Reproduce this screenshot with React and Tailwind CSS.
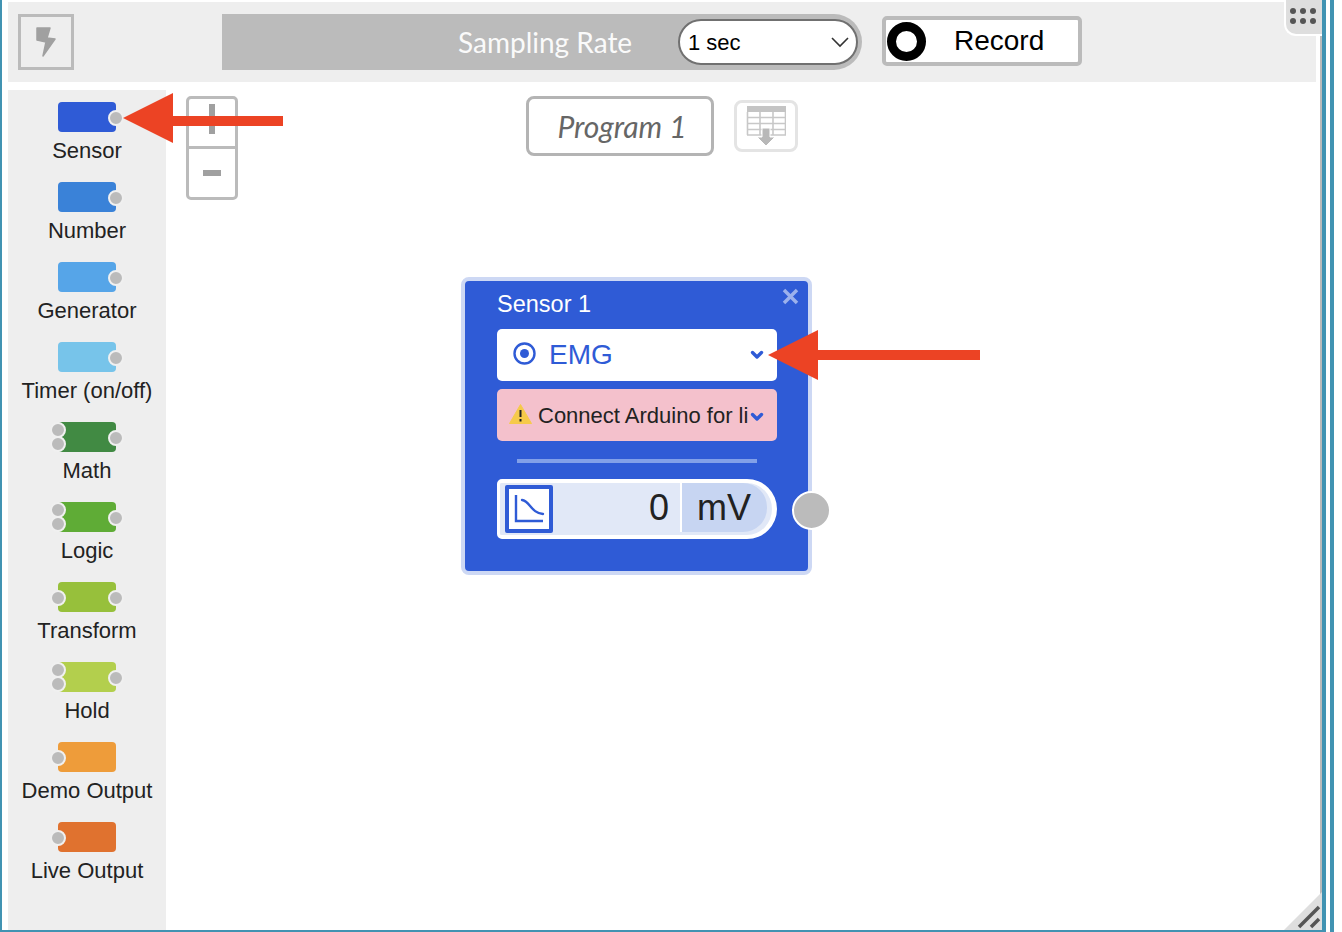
const blocks = [
  { label: "Sensor", color: "bg-[#2f5bd6]", inputs: 0, output: true },
  { label: "Number", color: "bg-[#3a82d8]", inputs: 0, output: true },
  { label: "Generator", color: "bg-[#56a5e8]", inputs: 0, output: true },
  { label: "Timer (on/off)", color: "bg-[#77c4ea]", inputs: 0, output: true },
  { label: "Math", color: "bg-[#418a43]", inputs: 2, output: true },
  { label: "Logic", color: "bg-[#5fac36]", inputs: 2, output: true },
  { label: "Transform", color: "bg-[#97c03b]", inputs: 1, output: true },
  { label: "Hold", color: "bg-[#b3cf4d]", inputs: 2, output: true },
  { label: "Demo Output", color: "bg-[#ee9c3a]", inputs: 1, output: false },
  { label: "Live Output", color: "bg-[#e0722f]", inputs: 1, output: false },
];

function Port({ className }) {
  return <span className={"absolute w-[16px] h-[16px] rounded-full bg-[#bbbbbb] border-2 border-[#f0f0f0] " + className} />;
}

function Block({ block }) {
  return (
    <div className="h-[80px] flex flex-col items-center">
      <div className={"relative w-[58px] h-[30px] rounded-[4px] " + block.color}>
        {block.inputs === 1 && <Port className="left-[-8px] top-[8px]" />}
        {block.inputs === 2 && <Port className="left-[-8px] top-[0px]" />}
        {block.inputs === 2 && <Port className="left-[-8px] top-[14px]" />}
        {block.output && <Port className="right-[-8px] top-[8px]" />}
      </div>
      <div className="mt-[6px] text-[22px] leading-[26px] text-[#222222] whitespace-nowrap">{block.label}</div>
    </div>
  );
}

function Arrow({ className, width, shaft }) {
  return (
    <svg className={"absolute " + className} width={width} height="52" viewBox={`0 0 ${width} 52`} fill="#ec4324">
      <path d={`M0 26 L50 1 L50 ${shaft} L${width} ${shaft} L${width} ${shaft + 10} L50 ${shaft + 10} L50 51 Z`} />
    </svg>
  );
}

function Chevron() {
  return (
    <svg width="14" height="10" viewBox="0 0 14 10" fill="none" stroke="#2f5bd6" strokeWidth="3.4" strokeLinecap="round" strokeLinejoin="round">
      <path d="M2.5 2.5 L7 7 L11.5 2.5" />
    </svg>
  );
}

export default function App() {
  return (
    <div className="relative w-[1342px] h-[932px] overflow-hidden bg-white font-['Liberation_Sans',Arial,sans-serif]">
      <div className="absolute left-0 top-0 w-[2px] h-full bg-[#4193b2]" />
      <div className="absolute left-[1322px] top-0 w-[4px] h-full bg-[#4193b2]" />
      <div className="absolute left-[1330px] top-0 w-[4px] h-full bg-[#4193b2]" />
      <div className="absolute left-0 top-[930px] w-[1326px] h-[2px] bg-[#4193b2]" />
      <div className="absolute left-[1320px] top-[36px] w-[2px] h-[860px] bg-[#bbbbbb]" />

      <div className="w-[1308px] ml-[8px] pt-[2px]">
        <header className="relative h-[80px] bg-[#eeeeee] flex items-center">
          <div className="ml-[10px] w-[56px] h-[56px] border-[3px] border-[#bbbbbb] flex items-center justify-center">
            <svg width="22" height="32" viewBox="0 0 22 32" fill="#a0a0a0" stroke="#a0a0a0" strokeWidth="1.5" strokeLinejoin="round">
              <path d="M2 2 L15 2 L12 12 L20 13 L8 30 L11 16 L2 14 Z" />
            </svg>
          </div>
          <div className="ml-[148px] w-[640px] h-[56px] bg-[#bbbbbb] rounded-r-[28px] flex items-center">
            <div className="ml-[236px] w-[175px] text-[28px] leading-none text-[#fafafa] font-['Lato',sans-serif] whitespace-nowrap">Sampling Rate</div>
            <div className="ml-[45px] w-[180px] h-[46px] rounded-[23px] bg-white border-2 border-[#707070] flex items-center justify-between pl-[8px] pr-[6px] text-[22px] text-black">
              <span>1 sec</span>
              <svg width="20" height="12" viewBox="0 0 20 12" fill="none" stroke="#333333" strokeWidth="1.6">
                <path d="M2 2 L10 10 L18 2" />
              </svg>
            </div>
          </div>
          <div className="ml-[20px] mb-[2px] w-[200px] h-[50px] bg-white border-[4px] border-[#bbbbbb] rounded-[5px] flex items-center">
            <span className="ml-[1px] w-[39px] h-[39px] rounded-full border-[9px] border-black bg-white" />
            <span className="ml-[28px] text-[28px] text-black">Record</span>
          </div>
          <div className="absolute right-[-6px] top-[-2px] w-[38px] h-[36px] bg-[#dedede] border-l-2 border-b-2 border-white rounded-bl-[12px] pr-[2px] pb-[2px] grid grid-cols-[6px_6px_6px] gap-x-[4px] gap-y-[4px] content-center justify-center">
            {[0, 1, 2, 3, 4, 5].map((i) => (
              <span key={i} className="w-[6px] h-[6px] rounded-full bg-[#555555]" />
            ))}
          </div>
        </header>

        <div className="flex mt-[8px]">
          <aside className="w-[158px] h-[842px] bg-[#eeeeee] pt-[12px]">
            {blocks.map((b) => (
              <Block key={b.label} block={b} />
            ))}
          </aside>

          <main className="relative flex-1">
            <div className="absolute left-[20px] top-[6px] w-[52px] h-[104px] border-[3px] border-[#bbbbbb] rounded-[5px] flex flex-col">
              <div className="h-[50px] border-b-[3px] border-[#bbbbbb] flex items-center justify-center">
                <div className="relative w-[18px] h-[30px] mb-[8px]">
                  <span className="absolute left-[6px] top-0 w-[6px] h-[30px] bg-[#a0a0a0]" />
                  <span className="absolute left-0 top-[12px] w-[18px] h-[6px] bg-[#a0a0a0]" />
                </div>
              </div>
              <div className="flex-1 flex items-center justify-center">
                <span className="w-[18px] h-[6px] bg-[#a0a0a0]" />
              </div>
            </div>

            <div className="absolute left-[360px] top-[6px] w-[188px] h-[60px] border-[3px] border-[#b4b4b4] rounded-[8px] pl-[4px] flex items-center justify-center text-[30px] italic text-[#666666] font-['Lato',sans-serif]">
              Program 1
            </div>
            <div className="absolute left-[568px] top-[10px] w-[64px] h-[52px] border-[3px] border-[#e4e4e4] rounded-[8px] flex items-center justify-center">
              <svg width="40" height="42" viewBox="0 0 40 42" fill="none">
                <rect x="1" y="1" width="39" height="6" fill="#c4c4c4" />
                <path d="M1.5 7 V30 M39.5 7 V30 M1 12.5 H40 M1 18.5 H40 M1 24.5 H40 M1 30 H40 M14 7 V30 M27 7 V30" stroke="#c8c8c8" strokeWidth="1.6" />
                <path d="M16 23 H24 V32 H29 L20 41 L11 32 H16 Z" fill="#b8b8b8" stroke="#ffffff" strokeWidth="1" />
              </svg>
            </div>

            {/* sensor node */}
            <div className="absolute left-[295px] top-[187px] w-[351px] h-[298px] bg-[#2f5bd6] border-[4px] border-[#cdd8f4] rounded-[8px]">
              <div className="absolute left-[32px] top-[9px] text-[23.5px] leading-[28px] text-white">Sensor 1</div>
              <svg className="absolute right-[9px] top-[7px]" width="17" height="17" viewBox="0 0 17 17" stroke="#9cb1ec" strokeWidth="3.5">
                <path d="M2 2 L15 15 M15 2 L2 15" />
              </svg>
              <div className="absolute left-[32px] top-[48px] w-[280px] h-[52px] bg-white rounded-[5px] flex items-center">
                <svg className="ml-[16px] mb-[4px]" width="23" height="23" viewBox="0 0 23 23" fill="none">
                  <circle cx="11.5" cy="11.5" r="10" stroke="#2f5bd6" strokeWidth="2.4" />
                  <circle cx="11.5" cy="11.5" r="4.5" fill="#2f5bd6" />
                </svg>
                <span className="ml-[13px] text-[28px] text-[#2f5bd6]">EMG</span>
                <span className="ml-auto mr-[13px] flex"><Chevron /></span>
              </div>
              <div className="absolute left-[32px] top-[108px] w-[280px] h-[52px] bg-[#f4c1cc] rounded-[5px] flex items-center">
                <svg className="ml-[12px] mb-[3px]" width="23" height="20" viewBox="0 0 23 20">
                  <path d="M11.5 0.5 L22.5 19.5 L0.5 19.5 Z" fill="#f6ca4a" stroke="#f6ca4a" strokeLinejoin="round" />
                  <path d="M11.5 6 V13 M11.5 15 V17.5" stroke="#222222" strokeWidth="2" />
                </svg>
                <span className="ml-[6px] whitespace-nowrap text-[22px] text-[#222222]">Connect Arduino for li</span>
                <span className="ml-auto mr-[13px] mt-[4px] flex"><Chevron /></span>
              </div>
              <div className="absolute left-[52px] top-[178px] w-[240px] h-[4px] bg-[#82a0e8]" />
              <div className="absolute left-[32px] top-[198px] w-[280px] h-[60px] bg-[#e1e8f7] border-t-[4px] border-b-[4px] border-l-[3px] border-r-[5px] border-white rounded-l-[5px] rounded-r-[30px] flex items-start pr-[5px]">
                <div className="ml-[5px] mt-[2px] w-[48px] h-[48px] border-[4px] border-[#2f5bd6] rounded-[2px] bg-white shrink-0">
                  <svg width="40" height="40" viewBox="0 0 40 40" fill="none" stroke="#2f5bd6" strokeWidth="2.4">
                    <path d="M7 6 V32 H34" />
                    <path d="M13 11 C21 12 22 24 34 25" strokeLinecap="round" />
                  </svg>
                </div>
                <div className="flex-1 h-[49px] flex items-center justify-end pr-[11px] text-[36px] text-[#222222]">0</div>
                <div className="w-[87px] h-[49px] bg-[#c7d5f2] border-l-2 border-white rounded-r-[24px] flex items-center pl-[15px] text-[36px] text-[#222222]">mV</div>
              </div>
              <span className="absolute right-[-23px] top-[210px] w-[39px] h-[39px] rounded-full bg-[#bbbbbb] border-2 border-white" />
            </div>
          </main>
        </div>
      </div>

      <Arrow className="left-[123px] top-[92px]" width={160} shaft={24} />
      <Arrow className="left-[768px] top-[329px]" width={212} shaft={21} />

      <svg className="absolute left-[1284px] top-[892px]" width="38" height="38" viewBox="0 0 38 38">
        <path d="M38 0 V38 H0 Z" fill="#dedede" />
        <path d="M15 35 L35 15 M27 35 L35 27" stroke="#555555" strokeWidth="3.5" />
      </svg>
    </div>
  );
}
